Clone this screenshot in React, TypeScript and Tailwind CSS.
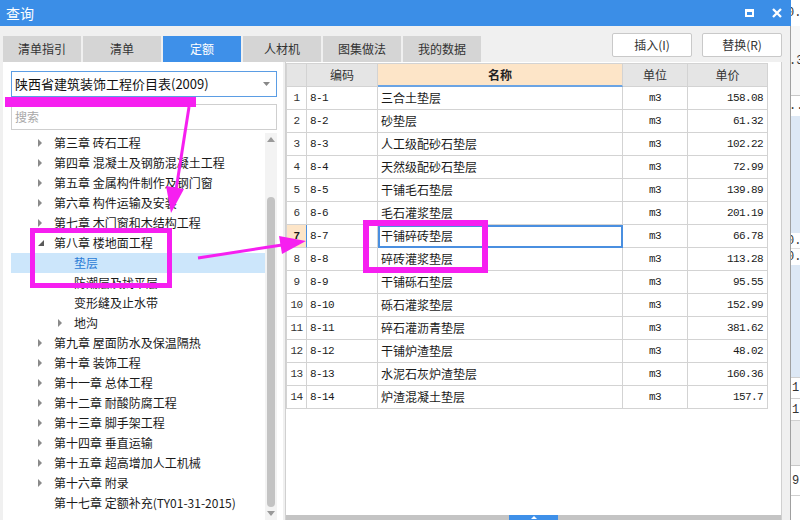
import React from 'react';

const rows: [string, string, string][] = [
  ['8-1', '三合土垫层', '158.08'],
  ['8-2', '砂垫层', '61.32'],
  ['8-3', '人工级配砂石垫层', '102.22'],
  ['8-4', '天然级配砂石垫层', '72.99'],
  ['8-5', '干铺毛石垫层', '139.89'],
  ['8-6', '毛石灌浆垫层', '201.19'],
  ['8-7', '干铺碎砖垫层', '66.78'],
  ['8-8', '碎砖灌浆垫层', '113.28'],
  ['8-9', '干铺砾石垫层', '95.55'],
  ['8-10', '砾石灌浆垫层', '152.99'],
  ['8-11', '碎石灌沥青垫层', '381.62'],
  ['8-12', '干铺炉渣垫层', '48.02'],
  ['8-13', '水泥石灰炉渣垫层', '160.36'],
  ['8-14', '炉渣混凝土垫层', '157.7'],
];

type Node = { t: string; lvl: 0 | 1; arrow: 'r' | 'd' | 'n'; sel?: boolean };
const tree: Node[] = [
  { t: '第三章 砖石工程', lvl: 0, arrow: 'r' },
  { t: '第四章 混凝土及钢筋混凝土工程', lvl: 0, arrow: 'r' },
  { t: '第五章 金属构件制作及钢门窗', lvl: 0, arrow: 'r' },
  { t: '第六章 构件运输及安装', lvl: 0, arrow: 'r' },
  { t: '第七章 木门窗和木结构工程', lvl: 0, arrow: 'r' },
  { t: '第八章 楼地面工程', lvl: 0, arrow: 'd' },
  { t: '垫层', lvl: 1, arrow: 'n', sel: true },
  { t: '防潮层及找平层', lvl: 1, arrow: 'n' },
  { t: '变形缝及止水带', lvl: 1, arrow: 'n' },
  { t: '地沟', lvl: 1, arrow: 'r' },
  { t: '第九章 屋面防水及保温隔热', lvl: 0, arrow: 'r' },
  { t: '第十章 装饰工程', lvl: 0, arrow: 'r' },
  { t: '第十一章 总体工程', lvl: 0, arrow: 'r' },
  { t: '第十二章 耐酸防腐工程', lvl: 0, arrow: 'r' },
  { t: '第十三章 脚手架工程', lvl: 0, arrow: 'r' },
  { t: '第十四章 垂直运输', lvl: 0, arrow: 'r' },
  { t: '第十五章 超高增加人工机械', lvl: 0, arrow: 'r' },
  { t: '第十六章 附录', lvl: 0, arrow: 'r' },
  { t: '第十七章 定额补充(TY01-31-2015)', lvl: 0, arrow: 'n' },
];

const tabs = ['清单指引', '清单', '定额', '人材机', '图集做法', '我的数据'];

function Arrow({ kind }: { kind: 'r' | 'd' | 'n' }) {
  if (kind === 'r')
    return (
      <svg width="5" height="8" viewBox="0 0 5 8">
        <polygon points="0,0 4,4 0,8" fill="#8a8a8a" />
      </svg>
    );
  if (kind === 'd')
    return (
      <svg width="6" height="6" viewBox="0 0 6 6">
        <polygon points="6,0 6,6 0,6" fill="#5a5a5a" />
      </svg>
    );
  return null;
}

export default function App() {
  return (
    <div className="relative w-[800px] h-[520px] overflow-hidden flex font-['Noto_Sans_CJK_SC',sans-serif] text-[12px] text-[#1a1a1a] bg-white">
      <div className="w-[791px] h-full flex flex-col">
        {/* title bar */}
        <div className="h-[26px] shrink-0 bg-[#3b8ee7] flex items-center pl-[6px] pr-[9px] text-white">
          <span className="text-[14px] leading-none">查询</span>
          <div className="ml-auto flex items-center gap-[18px]">
            <div className="w-[9px] h-[8px] border-2 border-t-[3px] border-white" />
            <svg width="10" height="10" viewBox="0 0 10 10">
              <path d="M1 1L9 9M9 1L1 9" stroke="white" strokeWidth="2.3" />
            </svg>
          </div>
        </div>
        {/* body */}
        <div className="flex-1 min-h-0 bg-[#f0f0f0] border-r border-[#a0a0a0] flex flex-col pl-[3px] pr-[8px]">
          <div className="h-[36px] shrink-0 flex">
            <div className="flex items-end gap-[2px]">
              {tabs.map((t) => (
                <div
                  key={t}
                  className={
                    t === '定额'
                      ? 'w-[78px] h-[26px] flex items-center justify-center bg-[#3e90e9] text-white text-[12px]'
                      : 'w-[78px] h-[26px] flex items-center justify-center bg-[#d5d5d5] text-[#333] text-[12px]'
                  }
                >
                  {t}
                </div>
              ))}
            </div>
            <div className="ml-auto mt-[7px] flex gap-[10px] h-[24px]">
              <div className="w-[80px] h-[24px] bg-white border border-[#c9c9c9] rounded-[2px] flex items-center justify-center text-[#333]">
                插入(I)
              </div>
              <div className="w-[80px] h-[24px] bg-white border border-[#c9c9c9] rounded-[2px] flex items-center justify-center text-[#333]">
                替换(R)
              </div>
            </div>
          </div>
          <div className="flex-1 min-h-0 flex gap-[2px]">
            {/* left panel */}
            <div className="w-[280px] h-full bg-white flex flex-col pl-[8px] pr-[6px] pt-[9px] overflow-hidden">
              <div className="h-[26px] shrink-0 border border-[#5b9de4] flex items-center pl-[3px] pr-[6px] text-[13px] text-[#111]">
                <span>陕西省建筑装饰工程价目表(2009)</span>
                <svg className="ml-auto" width="7" height="4" viewBox="0 0 7 4">
                  <polygon points="0,0 7,0 3.5,4" fill="#888" />
                </svg>
              </div>
              <div className="mt-[7px] h-[26px] shrink-0 border border-[#cfcfcf] flex items-center pl-[3px] text-[#a8a8a8] text-[12px]">
                搜索
              </div>
              <div className="mt-[3px] flex-1 min-h-0 flex">
                <div className="w-[254px] flex flex-col">
                  {tree.map((n) => (
                    <div
                      key={n.t}
                      className={
                        (n.sel ? 'bg-[#cce6fb] text-[#2a7bd6] ' : 'text-[#1a1a1a] ') +
                        (n.lvl === 0 ? 'pl-[27px] ' : 'pl-[47px] ') +
                        'h-[20px] shrink-0 flex items-center whitespace-nowrap'
                      }
                    >
                      <div className="w-[16px] flex items-center">
                        <Arrow kind={n.arrow} />
                      </div>
                      <span>{n.t}</span>
                    </div>
                  ))}
                </div>
                <div className="w-[12px] bg-[#f3f3f3] flex flex-col items-center">
                  <div className="h-[12px] flex items-center justify-center">
                    <svg width="8" height="5" viewBox="0 0 8 5">
                      <polygon points="0,5 4,0 8,5" fill="#9a9a9a" />
                    </svg>
                  </div>
                  <div className="mt-[52px] w-[8px] h-[310px] rounded-[4px] bg-[#c3c3c3]" />
                  <div className="mt-[4px]">
                    <svg width="8" height="5" viewBox="0 0 8 5">
                      <polygon points="0,0 8,0 4,5" fill="#9a9a9a" />
                    </svg>
                  </div>
                </div>
              </div>
            </div>
            {/* right panel */}
            <div className="flex-1 h-full bg-white border-x border-[#d0d0d0] flex flex-col pt-[1px]">
              <div className="flex flex-col w-[482px] border-l border-[#d3d3d3]">
                <div className="h-[24px] flex border-t border-[#d3d3d3]">
                  <div className="w-[20px] bg-[#e5e5e5] border-r border-b border-[#d3d3d3]" />
                  <div className="w-[71px] bg-[#e5e5e5] border-r border-b border-[#d3d3d3] flex items-center justify-center text-[#333]">编码</div>
                  <div className="w-[245px] bg-[#fde5c8] border-r border-b-2 border-b-[#6aa4e4] border-r-[#d3d3d3] flex items-center justify-center font-bold text-[#222]">名称</div>
                  <div className="w-[65px] bg-[#e5e5e5] border-r border-b border-[#d3d3d3] flex items-center justify-center text-[#333]">单位</div>
                  <div className="w-[80px] bg-[#e5e5e5] border-r border-b border-[#d3d3d3] flex items-center justify-center text-[#333]">单价</div>
                </div>
                {rows.map((r, i) => {
                  const sel = i === 6;
                  return (
                    <div key={r[0]} className="h-[23px] flex">
                      <div
                        className={
                          sel
                            ? 'w-[20px] bg-[#fde5c8] border-r border-b border-r-[#4a8fe0] border-b-[#d3d3d3] flex items-center justify-center font-bold font-[\'Liberation_Mono\',monospace] text-[11px] tracking-[-0.6px]'
                            : 'w-[20px] border-r border-b border-[#d3d3d3] flex items-center justify-center font-[\'Liberation_Mono\',monospace] text-[11px] tracking-[-0.6px] text-[#333]'
                        }
                      >
                        {i + 1}
                      </div>
                      <div className="w-[71px] border-r border-b border-[#d3d3d3] flex items-center pl-[3px] font-['Liberation_Mono',monospace] text-[11px] tracking-[-0.6px]">
                        {r[0]}
                      </div>
                      <div
                        className={
                          sel
                            ? 'w-[245px] border-r border-b border-[#d3d3d3] flex items-center pl-[3px] outline-2 outline-[#4a8fe0] -outline-offset-2'
                            : 'w-[245px] border-r border-b border-[#d3d3d3] flex items-center pl-[3px]'
                        }
                      >
                        {r[1]}
                      </div>
                      <div className="w-[65px] border-r border-b border-[#d3d3d3] flex items-center justify-center font-['Liberation_Mono',monospace] text-[11px] tracking-[-0.6px]">
                        m3
                      </div>
                      <div className="w-[80px] border-r border-b border-[#d3d3d3] flex items-center justify-end pr-[4px] font-['Liberation_Mono',monospace] text-[11px] tracking-[-0.6px]">
                        {r[2]}
                      </div>
                    </div>
                  );
                })}
              </div>
              <div className="flex-1" />
              <div className="h-[5px] shrink-0 bg-[#c4c4c4] flex justify-center">
                <div className="w-[49px] h-full bg-[#3e90e9] flex justify-center pt-[1px]">
                  <svg width="6" height="3" viewBox="0 0 6 3">
                    <polygon points="0,3 3,0 6,3" fill="white" />
                  </svg>
                </div>
              </div>
            </div>
          </div>
        </div>
      </div>
      {/* background app strip */}
      <div className="w-[9px] h-full flex flex-col font-['Liberation_Mono',monospace] text-[12px] text-[#333] overflow-hidden">
        <div className="h-[26px] bg-white flex items-center -ml-[4px]">0.</div>
        <div className="h-[69px] bg-[#f7f7f7] flex items-center -ml-[2px]">.3</div>
        <div className="h-[1px] bg-[#c8c8c8]" />
        <div className="h-[20px] bg-white flex items-center -ml-[2px]">..</div>
        <div className="h-[117px] bg-[#dde8f5]" />
        <div className="h-[16px] bg-white flex items-center -ml-[4px] border-b border-[#e0e0e0]">0.</div>
        <div className="h-[16px] bg-white flex items-center -ml-[4px]">0.</div>
        <div className="h-[112px] bg-[#dde8f5]" />
        <div className="h-[22px] bg-white flex items-center border-y border-[#d0d0d0] pl-[1px]">1</div>
        <div className="h-[22px] bg-white flex items-center border-b border-[#d0d0d0] pl-[1px]">1</div>
        <div className="h-[45px] bg-[#ececec] border-b border-[#c8c8c8]" />
        <div className="h-[30px] bg-white flex items-center border-b border-[#d0d0d0] pl-[1px]">9</div>
        <div className="flex-1 bg-white" />
      </div>
      {/* annotations */}
      <svg className="absolute inset-0 pointer-events-none" width="800" height="520" viewBox="0 0 800 520">
        <rect x="5" y="97" width="191" height="10" fill="#f61ff0" />
        <rect x="32.5" y="230.5" width="137" height="55" fill="none" stroke="#f61ff0" strokeWidth="5" />
        <line x1="189" y1="107" x2="176" y2="190" stroke="#f61ff0" strokeWidth="3" />
        <polygon points="171,213 166,186 184,189" fill="#f61ff0" />
        <line x1="198" y1="258" x2="282" y2="245" stroke="#f61ff0" strokeWidth="3" />
        <polygon points="306,241 279,236 282,254" fill="#f61ff0" />
        <rect x="366" y="223" width="119" height="47" fill="none" stroke="#f61ff0" strokeWidth="6" />
      </svg>
    </div>
  );
}
